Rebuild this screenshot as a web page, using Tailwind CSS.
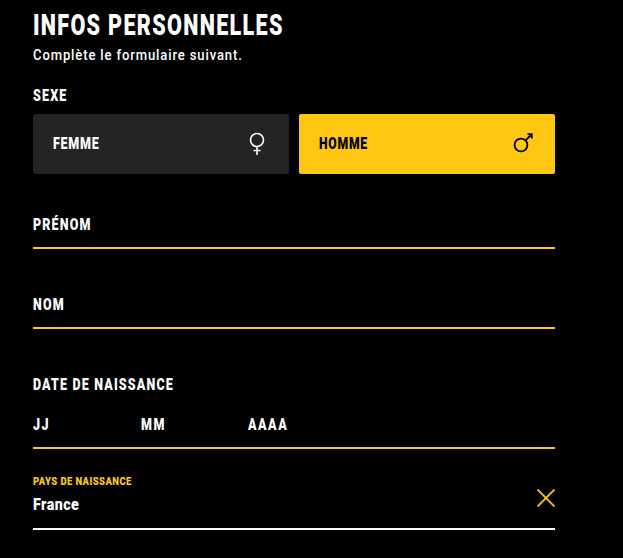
<!DOCTYPE html>
<html lang="fr">
<head>
  <meta charset="UTF-8">
  <title>Infos personnelles</title>
  <script src="https://cdn.jsdelivr.net/npm/@tailwindcss/browser@4"></script>
</head>
<body class="bg-black text-white font-['Roboto',sans-serif] overflow-hidden">
  <main class="w-[522px] ml-[33px] h-[558px]">
    <h1 class="pt-[7px] h-[40px] text-[30px] leading-[36px] font-black tracking-[1.8px] whitespace-nowrap origin-left scale-x-[0.72]">INFOS PERSONNELLES</h1>
    <p class="mt-[6px] h-[18px] text-[15px] leading-[18px] font-medium tracking-[1px] whitespace-nowrap origin-left scale-x-[0.87]">Complète le formulaire suivant.</p>

    <!-- sexe -->
    <div class="mt-[23px] h-[18px] text-[16px] leading-[18px] font-black tracking-[1.5px] origin-left scale-x-[0.78]">SEXE</div>
    <div class="mt-[9px] flex gap-[10px]">
      <button class="flex-1 h-[60px] rounded-[2px] bg-[#242424] flex items-center justify-between pl-[20px] pr-[22px] text-[16px] font-black tracking-[1px]">
        <span class="w-[60px] text-left origin-left scale-x-[0.78]">FEMME</span>
        <svg class="w-[20px] h-[24px]" viewBox="0 0 20 24" fill="none" stroke="#fff" stroke-width="1.6"><circle cx="10" cy="8" r="6.5"/><path d="M10 14.5V23M6.5 18.5h7"/></svg>
      </button>
      <button class="flex-1 h-[60px] rounded-[2px] bg-[#ffc614] text-black flex items-center justify-between pl-[20px] pr-[22px] text-[16px] font-black tracking-[1px]">
        <span class="w-[60px] text-left origin-left scale-x-[0.76]">HOMME</span>
        <svg class="w-[20px] h-[20px] -mt-[2px]" viewBox="0 0 20 20" fill="none" stroke="#000" stroke-width="1.8"><circle cx="8" cy="12" r="6.4"/><path d="M12.8 7.2L18.5 1.5M14.5 1.2H18.8V5.5"/></svg>
      </button>
    </div>

    <!-- champs -->
    <div class="mt-[39px] h-[36px] pt-[2px] border-b-2 border-[#ffc614] text-[16px] leading-[20px] font-black tracking-[1.5px]"><span class="block origin-left scale-x-[0.78]">PRÉNOM</span></div>
    <div class="mt-[44px] h-[36px] pt-[2px] border-b-2 border-[#ffc614] text-[16px] leading-[20px] font-black tracking-[1.5px]"><span class="block origin-left scale-x-[0.78]">NOM</span></div>

    <div class="mt-[46px] h-[20px] text-[16px] leading-[20px] font-black tracking-[1.5px] whitespace-nowrap origin-left scale-x-[0.78]">DATE DE NAISSANCE</div>
    <div class="mt-[20px] h-[34px] border-b-2 border-[#ffc614] flex text-[16px] leading-[20px] font-black tracking-[2px]">
      <span class="w-[108px] origin-left scale-x-[0.78]">JJ</span>
      <span class="w-[107px] origin-left scale-x-[0.78]">MM</span>
      <span class="origin-left scale-x-[0.78]">AAAA</span>
    </div>

    <!-- pays -->
    <div class="mt-[26px] h-[55px] border-b-2 border-white flex justify-between">
      <div>
        <div class="text-[11px] leading-[14px] font-black text-[#ffc614] tracking-[0.5px] whitespace-nowrap origin-left scale-x-[0.86]">PAYS DE NAISSANCE</div>
        <div class="mt-[6px] text-[16px] leading-[20px] font-black tracking-[0.5px] origin-left scale-x-[0.89]">France</div>
      </div>
      <svg class="w-[18px] h-[18px] mt-[14px]" viewBox="0 0 18 18" fill="none" stroke="#ffc614" stroke-width="1.8"><path d="M0.5 0.5L17.5 17.5M17.5 0.5L0.5 17.5"/></svg>
    </div>
  </main>
</body>
</html>
